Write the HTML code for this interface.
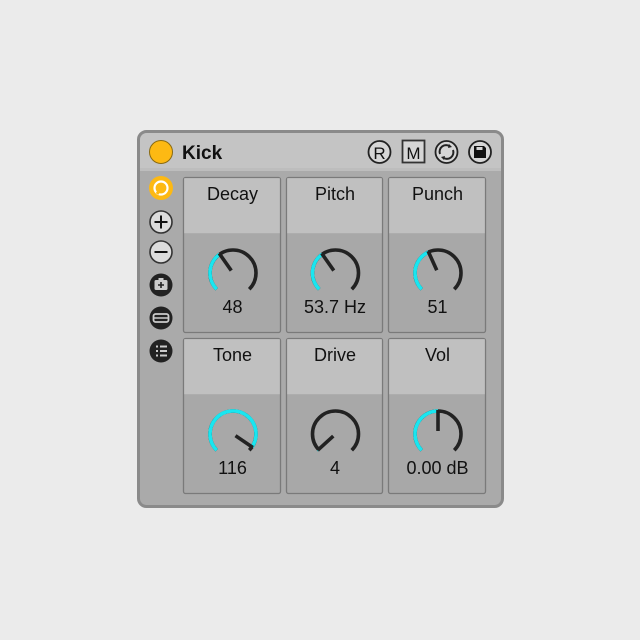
<!DOCTYPE html>
<html><head><meta charset="utf-8"><style>
html,body{margin:0;padding:0;background:#ebebeb;}
svg{display:block}
text{font-family:"Liberation Sans",sans-serif;fill:#111}
</style></head><body>
<svg id="s" width="640" height="640" viewBox="0 0 640 640" xmlns="http://www.w3.org/2000/svg">
<rect x="0" y="0" width="640" height="640" fill="#ebebeb"/>
<rect x="138.5" y="131.5" width="364" height="375" rx="8" fill="#aaaaaa" stroke="#8a8a8a" stroke-width="3"/>
<path d="M140 168 V140 a7 7 0 0 1 7 -7 H494 a7 7 0 0 1 7 7 V168 Z" fill="#c4c4c4"/>
<rect x="140" y="168" width="361" height="3" fill="#bdbdbd"/>
<!-- header -->
<circle cx="161" cy="152" r="11.5" fill="#fdb913" stroke="#8a6a10" stroke-width="1"/>
<text x="182" y="159" font-size="19" font-weight="bold">Kick</text>
<circle cx="379.5" cy="152" r="11" fill="#d6d6d6" stroke="#222" stroke-width="1.8"/>
<text x="379.5" y="159" font-size="17" text-anchor="middle">R</text>
<rect x="402.5" y="140.5" width="22" height="22" fill="#d6d6d6" stroke="#333" stroke-width="1.8"/>
<text x="413.5" y="159" font-size="17" text-anchor="middle">M</text>
<circle cx="446.5" cy="152" r="11" fill="#d6d6d6" stroke="#222" stroke-width="1.8"/>
<path d="M440 154 a6.5 6.5 0 0 1 10 -7.5 M453 150 a6.5 6.5 0 0 1 -10 7.5" fill="none" stroke="#222" stroke-width="2"/>
<path d="M449 144 l3 3 -4 1z M444 160 l-3 -3 4 -1z" fill="#222"/>
<circle cx="480" cy="152" r="11" fill="#d6d6d6" stroke="#222" stroke-width="1.8"/>
<path d="M474 146 h10 l2 2 v10 h-12z" fill="#111"/>
<rect x="476.5" y="147" width="6" height="3" fill="#d6d6d6"/>
<!-- sidebar -->
<circle cx="161" cy="188" r="12" fill="#fdb913"/>
<circle cx="161" cy="188" r="6.5" fill="none" stroke="#fff" stroke-width="2.2"/>
<path d="M161 188 l-4 6" stroke="#fdb913" stroke-width="3"/>
<circle cx="161" cy="222" r="11" fill="#dcdcdc" stroke="#333" stroke-width="1.6"/>
<path d="M154.5 222 h13 M161 215.5 v13" stroke="#111" stroke-width="2"/>
<circle cx="161" cy="252" r="11" fill="#dcdcdc" stroke="#333" stroke-width="1.6"/>
<path d="M154.5 252 h13" stroke="#111" stroke-width="2"/>
<circle cx="161" cy="285" r="11.5" fill="#222"/>
<rect x="154.5" y="280" width="13" height="10" rx="1.5" fill="#ccc"/><rect x="158.5" y="278" width="5" height="3" fill="#ccc"/>
<path d="M158 285 h6 M161 282 v6" stroke="#222" stroke-width="1.6"/>
<circle cx="161" cy="318" r="11.5" fill="#222"/>
<rect x="153.5" y="314" width="15" height="8" rx="2" fill="none" stroke="#ccc" stroke-width="1.8"/>
<path d="M154 318 h14" stroke="#ccc" stroke-width="1.5"/>
<circle cx="161" cy="351" r="11.5" fill="#222"/>
<path d="M156 346.5 h2 M160 346.5 h7 M156 351 h2 M160 351 h7 M156 355.5 h2 M160 355.5 h7" stroke="#ccc" stroke-width="2"/>
<g id="cells"></g>
</svg>
<script>
var cells=[
[183,177,97,"Decay","48",0.37],[286,177,96,"Pitch","53.7 Hz",0.37],[388,177,97,"Punch","51",0.41],
[183,338,97,"Tone","116",0.96],[286,338,96,"Drive","4",0.01],[388,338,97,"Vol","0.00 dB",0.5]];
var g=document.getElementById('cells'),h='';
function P(cx,cy,r,a){a=a*Math.PI/180;return [cx+r*Math.sin(a),cy-r*Math.cos(a)];}
function arc(cx,cy,r,a0,a1){var p=P(cx,cy,r,a0),q=P(cx,cy,r,a1);var la=(a1-a0)>180?1:0;
return 'M'+p[0].toFixed(2)+' '+p[1].toFixed(2)+' A'+r+' '+r+' 0 '+la+' 1 '+q[0].toFixed(2)+' '+q[1].toFixed(2);}
cells.forEach(function(c){var x=c[0],y=c[1],w=c[2];
h+='<rect x="'+(x+0.5)+'" y="'+(y+0.5)+'" width="'+w+'" height="155" rx="2" fill="#a8a8a8" stroke="#7a7a7a" stroke-width="1.3"/>';
h+='<rect x="'+(x+1.2)+'" y="'+(y+1.2)+'" width="'+(w-1.4)+'" height="55" fill="#c0c0c0"/>';
h+='<text x="'+(x+w/2+1)+'" y="'+(y+23)+'" font-size="18" text-anchor="middle">'+c[3]+'</text>';
var cx=x+w/2+1.5,cy=y+96,r=23,va=-135+270*c[5];
h+='<path d="'+arc(cx,cy,r,-135,135)+'" fill="none" stroke="#222" stroke-width="3.6"/>';
h+='<path d="'+arc(cx,cy,r,-135,va)+'" fill="none" stroke="#19e6f0" stroke-width="3.6"/>';
var a=P(cx,cy,3,va),b=P(cx,cy,r+1,va);
h+='<line x1="'+a[0]+'" y1="'+a[1]+'" x2="'+b[0]+'" y2="'+b[1]+'" stroke="#222" stroke-width="3.6"/>';
h+='<text x="'+(x+w/2+1)+'" y="'+(y+136)+'" font-size="18" text-anchor="middle">'+c[4]+'</text>';
});
g.innerHTML=h;
</script>
</body></html>
